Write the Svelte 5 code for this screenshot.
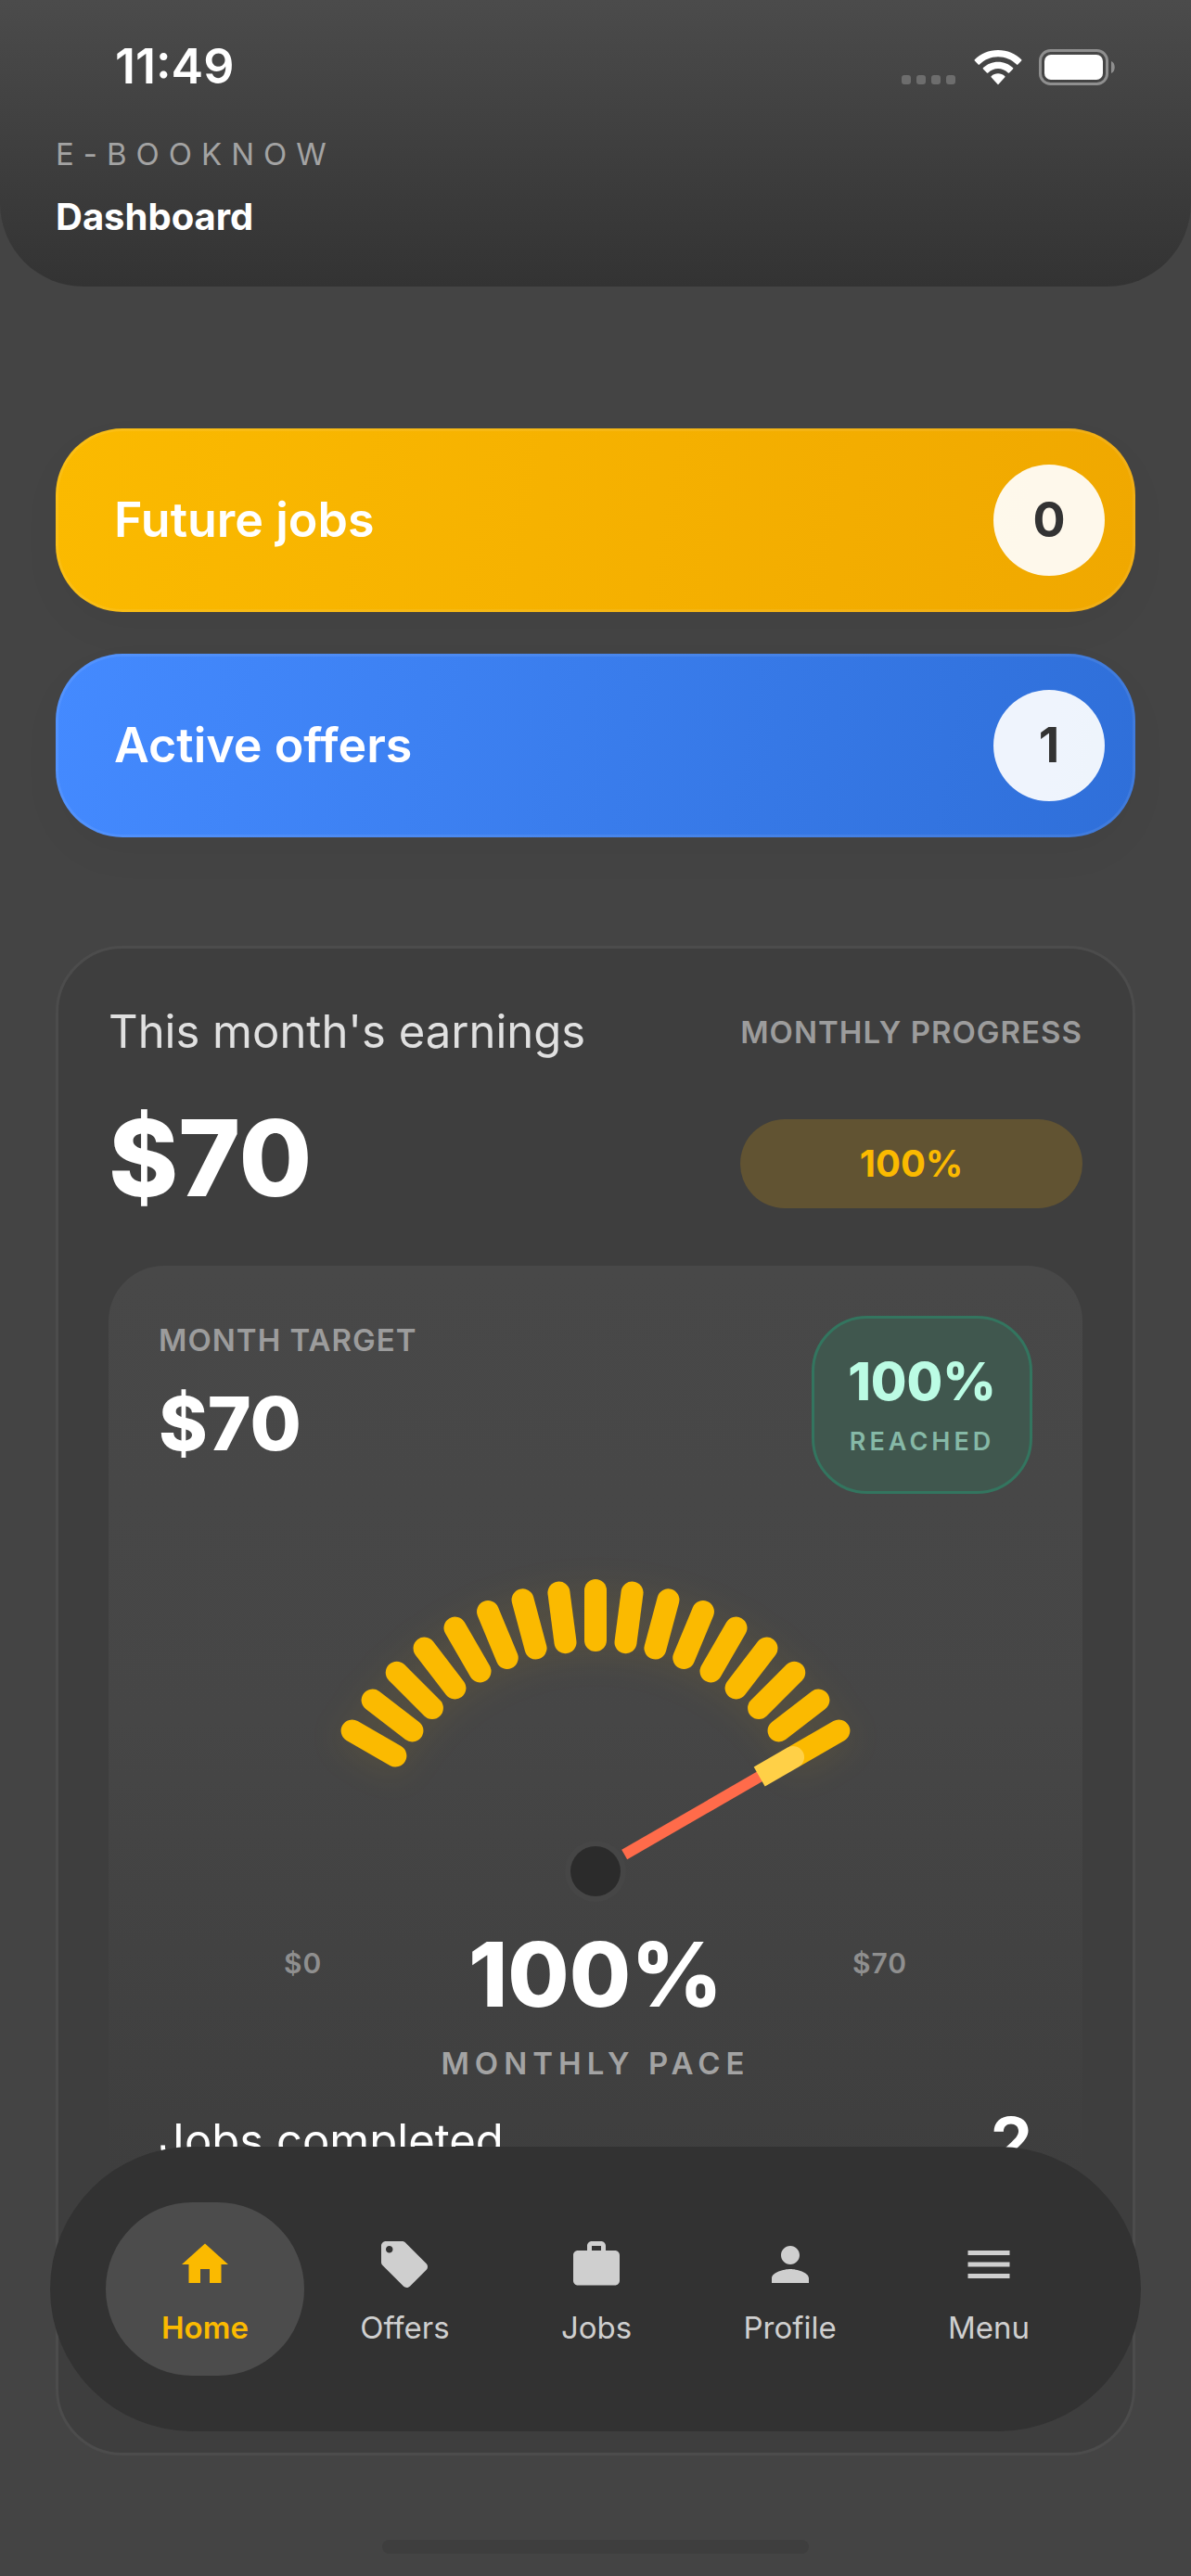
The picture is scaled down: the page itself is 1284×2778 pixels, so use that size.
<script lang="ts">
	interface Summary {
		label: string;
		count: number;
		tone: 'amber' | 'blue';
	}

	interface NavItem {
		id: string;
		label: string;
		icon: string;
	}

	const summaries: Summary[] = [
		{ label: 'Future jobs', count: 0, tone: 'amber' },
		{ label: 'Active offers', count: 1, tone: 'blue' }
	];

	const navItems: NavItem[] = [
		{ id: 'home', label: 'Home', icon: 'M10 20v-6h4v6h5v-8h3L12 3 2 12h3v8z' },
		{
			id: 'offers',
			label: 'Offers',
			icon: 'M21.41 11.58l-9-9C12.05 2.22 11.55 2 11 2H4c-1.1 0-2 .9-2 2v7c0 .55.22 1.05.59 1.42l9 9c.36.36.86.58 1.41.58.55 0 1.05-.22 1.41-.59l7-7c.37-.36.59-.86.59-1.41 0-.55-.23-1.06-.59-1.42zM5.5 7C4.67 7 4 6.33 4 5.5S4.67 4 5.5 4 7 4.67 7 5.5 6.33 7 5.5 7z'
		},
		{
			id: 'jobs',
			label: 'Jobs',
			icon: 'M20 6h-4V4c0-1.11-.89-2-2-2h-4c-1.11 0-2 .89-2 2v2H4c-1.11 0-1.99.89-1.99 2L2 19c0 1.11.89 2 2 2h16c1.11 0 2-.89 2-2V8c0-1.11-.89-2-2-2zm-6 0h-4V4h4v2z'
		},
		{
			id: 'profile',
			label: 'Profile',
			icon: 'M12 12c2.21 0 4-1.79 4-4s-1.79-4-4-4-4 1.79-4 4 1.79 4 4 4zm0 2c-2.67 0-8 1.34-8 4v2h16v-2c0-2.66-5.33-4-8-4z'
		},
		{ id: 'menu', label: 'Menu', icon: 'M3 18h18v-2H3v2zm0-5h18v-2H3v2zm0-7v2h18V6H3z' }
	];

	const earned = 70;
	const target = 70;
	const jobsCompleted = 2;
	const percent = Math.round((earned / target) * 100);

	// the dial sweeps 120 degrees, split over 17 ticks
	const tickCount = 17;
	const sweep = 120;
	const ticks = Array.from({ length: tickCount }, (_, i) => -sweep / 2 + (i * sweep) / (tickCount - 1));
	const needleAngle = -sweep / 2 + (sweep * percent) / 100;

	let active = 'home';
</script>

<div class="app">
	<header class="header">
		<div class="status">
			<span class="time">11:49</span>
			<div class="status-icons">
				<svg width="60" height="40" viewBox="0 0 60 40" fill="#6d6d6d">
					<rect x="0" y="29" width="10" height="10" rx="3" />
					<rect x="16" y="29" width="10" height="10" rx="3" />
					<rect x="32" y="29" width="10" height="10" rx="3" />
					<rect x="48" y="29" width="10" height="10" rx="3" />
				</svg>
				<svg width="52" height="40" viewBox="0 0 52 40" fill="#fff">
					<path d="M26 2C16 2 7 6 .8 12.200a1 1 0 0 0 0 1.400l3.800 4a1 1 0 0 0 1.400 0C11.300 12.300 18.300 9.300 26 9.300s14.700 3 20 8.300a1 1 0 0 0 1.400 0l3.800-4a1 1 0 0 0 0-1.400C45 6 36 2 26 2z" />
					<path d="M26 14.700c-6.200 0-11.800 2.400-16 6.300a1 1 0 0 0 0 1.500l3.900 4a1 1 0 0 0 1.400 0C18.200 23.700 21.900 22 26 22s7.800 1.700 10.700 4.500a1 1 0 0 0 1.400 0l3.900-4a1 1 0 0 0 0-1.500c-4.200-3.900-9.800-6.300-16-6.300z" />
					<path d="M26 27.300c-2.700 0-5.200 1-7.200 2.600a1 1 0 0 0 0 1.500l6.400 7.200a1 1 0 0 0 1.600 0l6.400-7.200a1 1 0 0 0 0-1.500c-2-1.600-4.500-2.600-7.200-2.600z" />
				</svg>
				<svg width="83" height="40" viewBox="0 0 83 40">
					<rect x="1.500" y="2.500" width="72" height="36" rx="11" fill="none" stroke="#8f8f8f" stroke-width="3" />
					<rect x="6" y="7" width="63" height="27" rx="7" fill="#fff" />
					<path d="M78 14c5 2 5 11 0 13z" fill="#8f8f8f" />
				</svg>
			</div>
		</div>
		<p class="brand">E-BOOKNOW</p>
		<h1>Dashboard</h1>
	</header>

	<main>
		<div class="summaries">
			{#each summaries as item}
				<button class="summary {item.tone}">
					<span>{item.label}</span>
					<span class="count">{item.count}</span>
				</button>
			{/each}
		</div>

		<section class="card">
			<div class="card-head">
				<div>
					<h2>This month's earnings</h2>
					<p class="amount">${earned}</p>
				</div>
				<div class="progress">
					<span class="caption">MONTHLY PROGRESS</span>
					<span class="pill">{percent}%</span>
				</div>
			</div>

			<div class="panel">
				<div class="panel-head">
					<div>
						<p class="caption">MONTH TARGET</p>
						<p class="target">${target}</p>
					</div>
					<div class="badge">
						<span class="badge-value">{percent}%</span>
						<span class="badge-label">REACHED</span>
					</div>
				</div>

				<svg class="gauge" width="600" height="370" viewBox="0 0 600 370">
					<g transform="translate(300 335)">
						<g class="ticks">
							{#each ticks as angle}
								<rect x="-12" y="-315" width="24" height="78" rx="12" transform="rotate({angle})" />
							{/each}
						</g>
						<g transform="rotate({needleAngle})">
							<rect x="-6" y="-206" width="12" height="170" fill="#ff6b4a" />
							<path d="M-12 -204V-246A12 12 0 0 1 12 -246V-204z" fill="#ffd047" />
						</g>
						<circle r="33" fill="#464646" />
						<circle r="27" fill="#2b2b2b" />
					</g>
				</svg>

				<div class="scale">
					<span class="bound">$0</span>
					<span class="pace">{percent}%</span>
					<span class="bound end">${target}</span>
				</div>
				<p class="pace-label">MONTHLY PACE</p>

				<div class="completed">
					<span>Jobs completed</span>
					<strong>{jobsCompleted}</strong>
				</div>
			</div>
		</section>
	</main>

	<nav class="tabbar">
		{#each navItems as item}
			<a href="#{item.id}" class:active={active === item.id} on:click={() => (active = item.id)}>
				<svg width="60" height="60" viewBox="0 0 24 24" fill="currentColor">
					<path d={item.icon} />
				</svg>
				<span>{item.label}</span>
			</a>
		{/each}
	</nav>
	<div class="home-indicator"></div>
</div>

<style>
	:global(body) {
		background: #444;
	}

	.app {
		box-sizing: border-box;
		min-height: 100vh;
		padding-bottom: 130px;
		background: #444;
		color: #fff;
		font-family: Inter, 'Liberation Sans', sans-serif;
	}

	p,
	h1,
	h2 {
		margin: 0;
	}

	.header {
		padding: 42px 60px 51px;
		border-radius: 0 0 90px 90px;
		background: linear-gradient(#4b4b4b, #333);
	}

	.status {
		display: flex;
		justify-content: space-between;
		align-items: center;
		padding: 0 21px 0 64px;
		margin-bottom: 44px;
	}

	.time {
		font-size: 52px;
		font-weight: 600;
		line-height: 60px;
	}

	.status-icons {
		display: flex;
		gap: 18px;
	}

	.brand {
		color: #a3a3a3;
		font-size: 33px;
		line-height: 40px;
		letter-spacing: 10px;
	}

	h1 {
		margin-top: 24px;
		font-size: 40px;
		font-weight: 700;
		line-height: 48px;
	}

	main {
		padding: 153px 60px 0;
	}

	.summaries {
		display: flex;
		flex-direction: column;
		gap: 45px;
		margin-bottom: 117px;
	}

	.summary {
		display: flex;
		justify-content: space-between;
		align-items: center;
		padding: 36px 30px 36px 60px;
		border: 3px solid rgba(255, 255, 255, 0.08);
		border-radius: 72px;
		background-origin: border-box;
		box-shadow: 0 18px 48px rgba(0, 0, 0, 0.03);
		color: #fff;
		font-family: inherit;
		font-size: 52px;
		font-weight: 600;
		line-height: 60px;
		text-align: left;
	}

	.amber {
		background-image: linear-gradient(100deg, #fbba00, #f0a800);
	}

	.blue {
		background-image: linear-gradient(100deg, #448aff, #2f6fd9);
	}

	.count {
		width: 120px;
		border-radius: 50%;
		background: rgba(255, 255, 255, 0.92);
		color: #333;
		font-size: 52px;
		font-weight: 700;
		line-height: 120px;
		text-align: center;
	}

	.card {
		padding: 54px;
		border: 3px solid #4c4c4c;
		border-radius: 72px;
		background: #3e3e3e;
	}

	.card-head,
	.panel-head,
	.completed {
		display: flex;
		justify-content: space-between;
		align-items: flex-start;
	}

	.card-head {
		margin-bottom: 56px;
	}

	h2 {
		color: #e0e0e0;
		font-size: 49px;
		font-weight: 400;
		line-height: 72px;
	}

	.amount {
		margin-top: 40px;
		font-size: 114px;
		font-weight: 800;
		line-height: 120px;
	}

	.progress {
		display: flex;
		flex-direction: column;
		gap: 58px;
	}

	.caption {
		color: #9c9c9c;
		font-size: 33px;
		font-weight: 600;
		line-height: 52px;
		letter-spacing: 1px;
	}

	.progress .caption {
		line-height: 72px;
	}

	.pill {
		border-radius: 48px;
		background: #615332;
		color: #fbba00;
		font-size: 40px;
		font-weight: 700;
		line-height: 96px;
		text-align: center;
	}

	.panel {
		padding: 54px 54px 240px;
		border-radius: 60px;
		background: linear-gradient(#484848, #464646 40%, #3e3e3e 80%);
	}

	.target {
		margin-top: 19px;
		font-size: 80px;
		font-weight: 800;
		line-height: 90px;
	}

	.badge {
		display: flex;
		flex-direction: column;
		gap: 16px;
		padding: 36px;
		border: 3px solid #33755f;
		border-radius: 60px;
		background: #40574e;
		text-align: center;
	}

	.badge-value {
		color: #bbfce4;
		font-size: 56px;
		font-weight: 800;
		line-height: 64px;
	}

	.badge-label {
		color: #86b9a7;
		font-size: 27px;
		font-weight: 600;
		line-height: 34px;
		letter-spacing: 4px;
	}

	.gauge {
		display: block;
		overflow: visible;
		margin: 72px auto 28px;
	}

	.ticks {
		fill: #fbba00;
		filter: drop-shadow(0 6px 18px rgba(251, 186, 0, 0.1));
	}

	.scale {
		display: grid;
		grid-template-columns: 1fr auto 1fr;
		max-width: 672px;
		margin: 0 auto;
	}

	.bound {
		color: #8f8f8f;
		font-size: 30px;
		font-weight: 600;
		line-height: 72px;
		letter-spacing: 1px;
	}

	.end {
		text-align: right;
	}

	.pace {
		font-size: 96px;
		font-weight: 800;
		line-height: 96px;
	}

	.pace-label {
		margin: 24px 0 18px;
		color: #a3a3a3;
		font-size: 33px;
		font-weight: 600;
		line-height: 48px;
		letter-spacing: 6px;
		text-align: center;
	}

	.completed {
		font-size: 49px;
		line-height: 84px;
	}

	.completed strong {
		font-size: 72px;
		font-weight: 700;
	}

	.tabbar {
		position: fixed;
		right: 54px;
		bottom: 156px;
		left: 54px;
		display: flex;
		justify-content: space-between;
		padding: 60px;
		border-radius: 154px;
		background: #323232;
	}

	.tabbar a {
		display: flex;
		flex-direction: column;
		align-items: center;
		gap: 16px;
		padding: 37px 60px 30px;
		border-radius: 94px;
		color: #cfcfcf;
		font-size: 33px;
		line-height: 44px;
		text-decoration: none;
	}

	.tabbar a.active {
		background: #4c4c4c;
		color: #fbba00;
		font-weight: 600;
	}

	.home-indicator {
		position: fixed;
		bottom: 24px;
		left: 50%;
		width: 460px;
		height: 15px;
		border-radius: 8px;
		background: #3e3e3e;
		transform: translateX(-50%);
	}
</style>
